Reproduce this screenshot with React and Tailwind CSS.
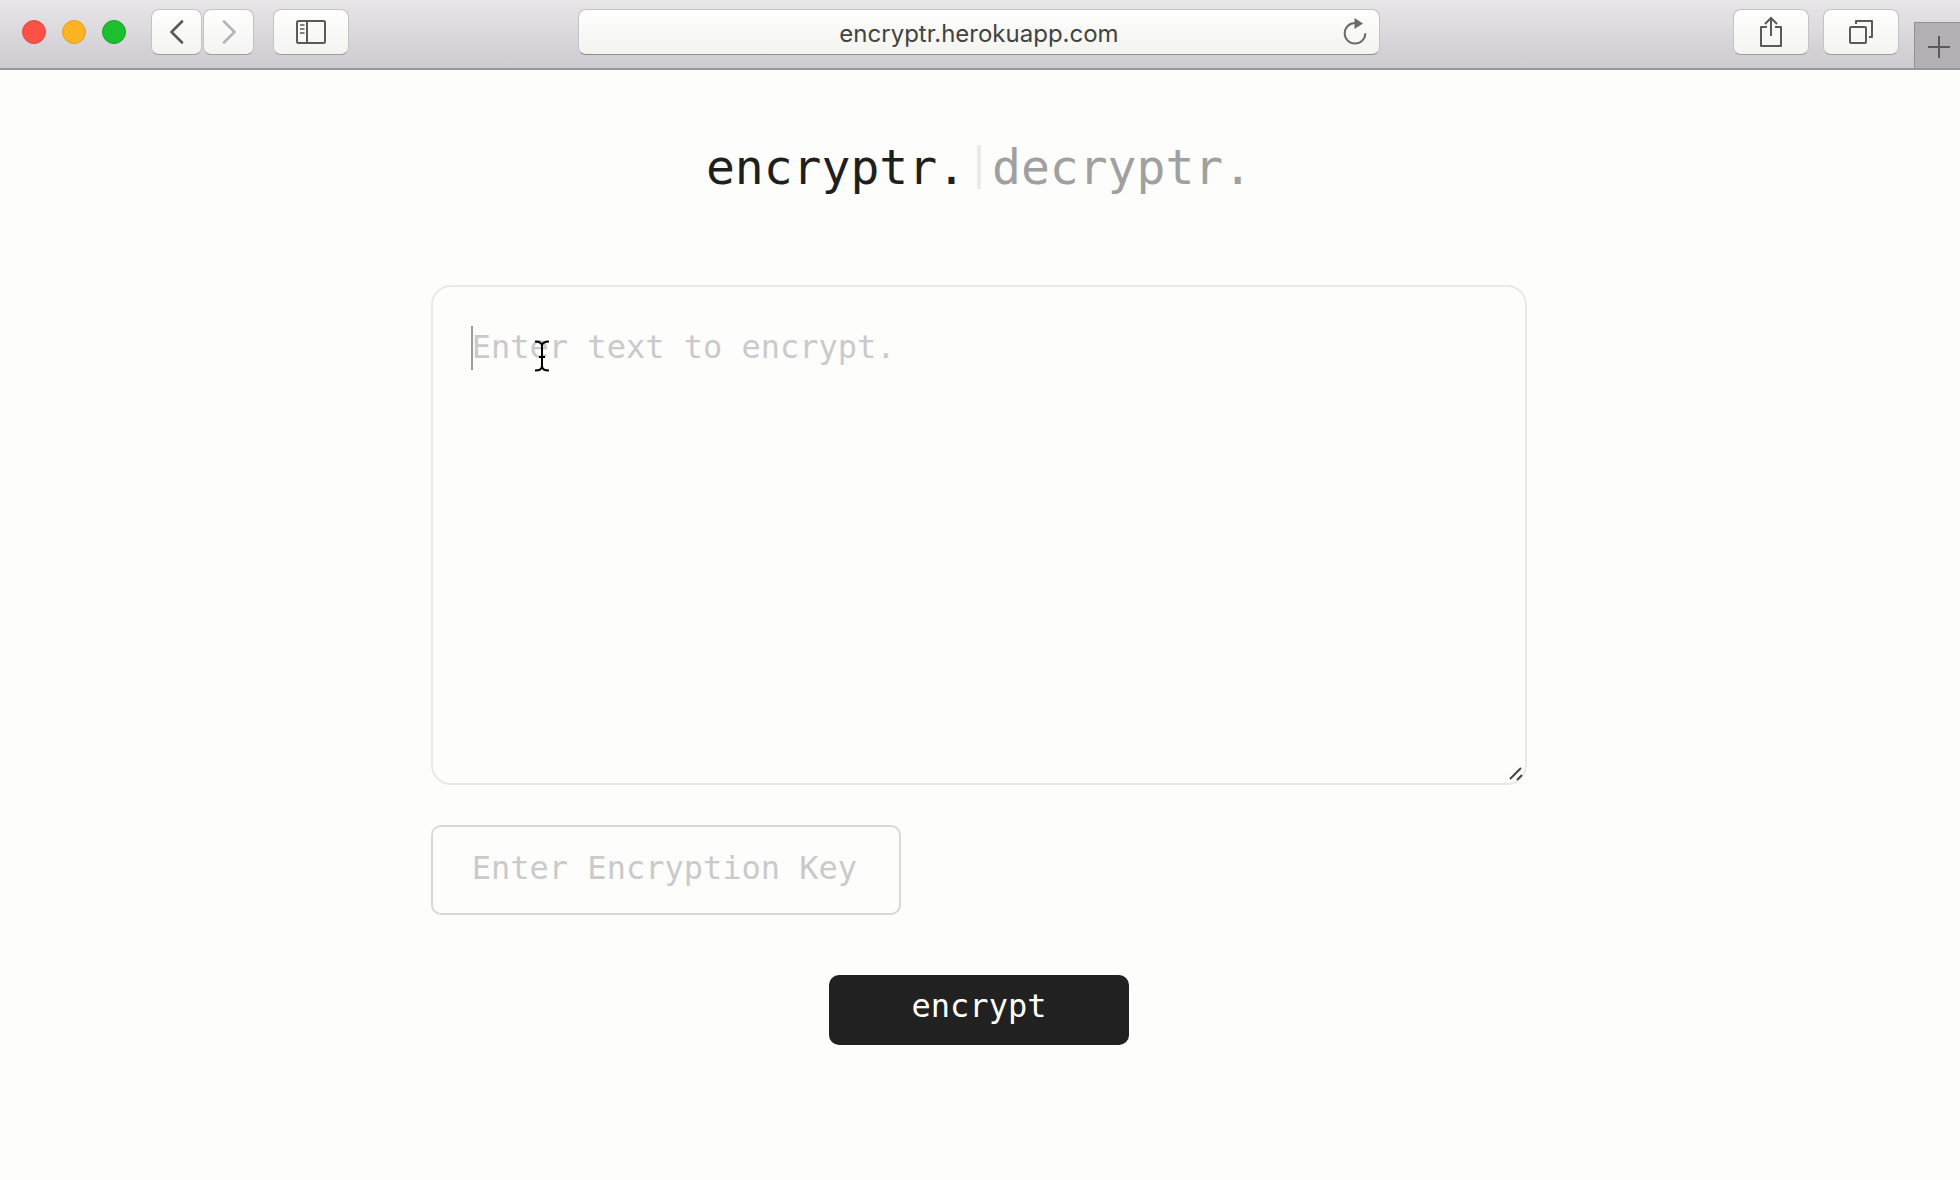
import React from "react";

const toolButton =
  "flex h-[46px] items-center justify-center rounded-lg border border-[#c4c2c5] border-b-[#9f9d9f] bg-linear-to-b from-[#fefefe] to-[#f4f4f1] text-[#5a5a58]";

function TrafficLights() {
  return (
    <div className="flex gap-4">
      <button aria-label="Close" className="size-6 rounded-full border border-[#dd4a42] bg-[#fb5147]" />
      <button aria-label="Minimize" className="size-6 rounded-full border border-[#dfa030] bg-[#fcb425]" />
      <button aria-label="Zoom" className="size-6 rounded-full border border-[#17a02a] bg-[#1cc02f]" />
    </div>
  );
}

function Toolbar() {
  return (
    <header className="grid h-[70px] grid-cols-[1fr_41%_1fr] border-b-2 border-[#98969a] bg-linear-to-b from-[#e9e6e9] to-[#cdcbd0]">
      <div className="flex items-center pb-1 pl-[22px]">
        <TrafficLights />
        <div className="ml-[25px] flex gap-px">
          <button aria-label="Back" className={toolButton + " w-[51px]"}>
            <svg width="14" height="24" viewBox="0 0 14 24" fill="none" stroke="currentColor" strokeWidth="2.6" strokeLinecap="round" strokeLinejoin="round">
              <path d="M12 1.5 1.5 12 12 22.5" />
            </svg>
          </button>
          <button aria-label="Forward" className={toolButton + " w-[51px]"}>
            <svg width="14" height="24" viewBox="0 0 14 24" fill="none" stroke="#b5b4b8" strokeWidth="2.6" strokeLinecap="round" strokeLinejoin="round">
              <path d="M2 1.5 12.5 12 2 22.5" />
            </svg>
          </button>
        </div>
        <button aria-label="Show sidebar" className={toolButton + " ml-[19px] w-[76px]"}>
          <svg width="30" height="24" viewBox="0 0 30 24" fill="none" stroke="currentColor" strokeWidth="2">
            <rect x="1" y="1" width="28" height="22" rx="1.5" />
            <path d="M11 1v22" />
            <path d="M4 5h4.500M4 9h4.500M4 13h4.500" strokeWidth="1.500" />
          </svg>
        </button>
      </div>

      <div className="flex items-center pr-0.5 pb-1">
        <div className="grid h-[46px] w-full grid-cols-[36px_1fr_36px] items-center rounded-lg border border-[#c4c2c5] border-b-[#8f8e8c] bg-linear-to-b from-[#fefefe] to-[#f3f3ef]">
          <input
            aria-label="Address"
            defaultValue="encryptr.herokuapp.com"
            className="col-start-2 min-w-0 bg-transparent pt-1 text-center font-['Inter',sans-serif] text-2xl leading-8 text-[#434340] outline-none"
          />
          <button aria-label="Reload" className="flex text-[#6b6b69]">
            <svg width="24" height="28" viewBox="0 0 24 28" fill="none">
              <path d="M12 5a10.300 10.300 0 1 0 10.300 10.300" stroke="currentColor" strokeWidth="2" />
              <path d="M11.500 0v11l8.500-5.500z" fill="currentColor" />
            </svg>
          </button>
        </div>
      </div>

      <div className="flex items-center justify-end">
        <button aria-label="Share" className={toolButton + " mb-1 w-[76px]"}>
          <svg width="24" height="32" viewBox="0 0 24 32" fill="none" stroke="currentColor" strokeWidth="2">
            <path d="M8 11H2v19h20V11h-6" strokeLinejoin="round" />
            <path d="M12 20V2M6 8l6-6 6 6" />
          </svg>
        </button>
        <button aria-label="Show all tabs" className={toolButton + " mb-1 ml-[14px] w-[76px]"}>
          <svg width="24" height="24" viewBox="0 0 24 24" fill="none" stroke="currentColor" strokeWidth="2" strokeLinejoin="round">
            <rect x="1" y="7" width="16" height="16" rx="1" />
            <path d="M7 4V1h16v16h-3" />
          </svg>
        </button>
        <button aria-label="New tab" className="ml-[15px] flex h-[46px] w-[46px] items-center justify-center self-end border-t border-l border-[#929096] bg-[#b2b0b4] pt-0.5 pl-0.5 text-[#5a5a58]">
          <svg width="22" height="22" viewBox="0 0 22 22" stroke="currentColor" strokeWidth="2">
            <path d="M11 0v22M0 11h22" />
          </svg>
        </button>
      </div>
    </header>
  );
}

export default function App() {
  return (
    <div className="min-h-screen bg-[#fdfdfc] font-['DejaVu_Sans_Mono',monospace]">
      <Toolbar />
      <div className="pr-0.5">
        <main className="mx-auto w-[56%]">
          <nav className="flex items-center justify-center gap-[11px] pt-[67px] text-5xl leading-[60px]">
            <a href="#encrypt" className="text-[#1f1f20]">encryptr.</a>
            <span className="h-11 w-1 bg-[#ebebea]" />
            <a href="#decrypt" className="text-[#a0a0a0]">decryptr.</a>
          </nav>

          <form className="mt-[88px] flex flex-col items-start" onSubmit={(e) => e.preventDefault()}>
            <div className="relative w-full">
              <textarea
                aria-label="Text to encrypt"
                placeholder="Enter text to encrypt."
                className="block h-[500px] w-full resize-none rounded-[20px] border-2 border-[#e9e9ea] bg-transparent px-[39px] py-[38px] text-[32px] leading-11 text-[#1f1f20] outline-none placeholder:text-[#cacaca]"
              />
              <span className="absolute top-[41px] left-10 h-11 w-0.5 bg-[#9b9b9f]" />
              <svg className="absolute top-[54px] left-[103px]" width="16" height="34" viewBox="0 0 16 34" fill="none" stroke="#000" strokeWidth="2">
                <path d="M1 2.500c4 0 7 1.500 7 4.500v20c0 3-3 4.500-7 4.500M15 2.500c-4 0-7 1.500-7 4.500M8 27c0 3 3 4.500 7 4.500M5 18h6" />
              </svg>
              <svg className="absolute right-1 bottom-1" width="14" height="14" viewBox="0 0 14 14" stroke="#454545" strokeWidth="2">
                <path d="M1 12 12 1M8 13l5-5" />
              </svg>
            </div>

            <input
              aria-label="Encryption key"
              placeholder="Enter Encryption Key"
              className="mt-10 h-[90px] w-[470px] rounded-[10px] border-2 border-[#d9d9d8] bg-transparent px-[39px] pb-1 text-[32px] text-[#1f1f20] outline-none placeholder:text-[#cacaca]"
            />

            <button type="submit" className="mt-[60px] h-[70px] w-[300px] self-center rounded-[10px] bg-[#212121] pb-2 text-[32px] leading-10 text-white">
              encrypt
            </button>
          </form>
        </main>
      </div>
    </div>
  );
}
